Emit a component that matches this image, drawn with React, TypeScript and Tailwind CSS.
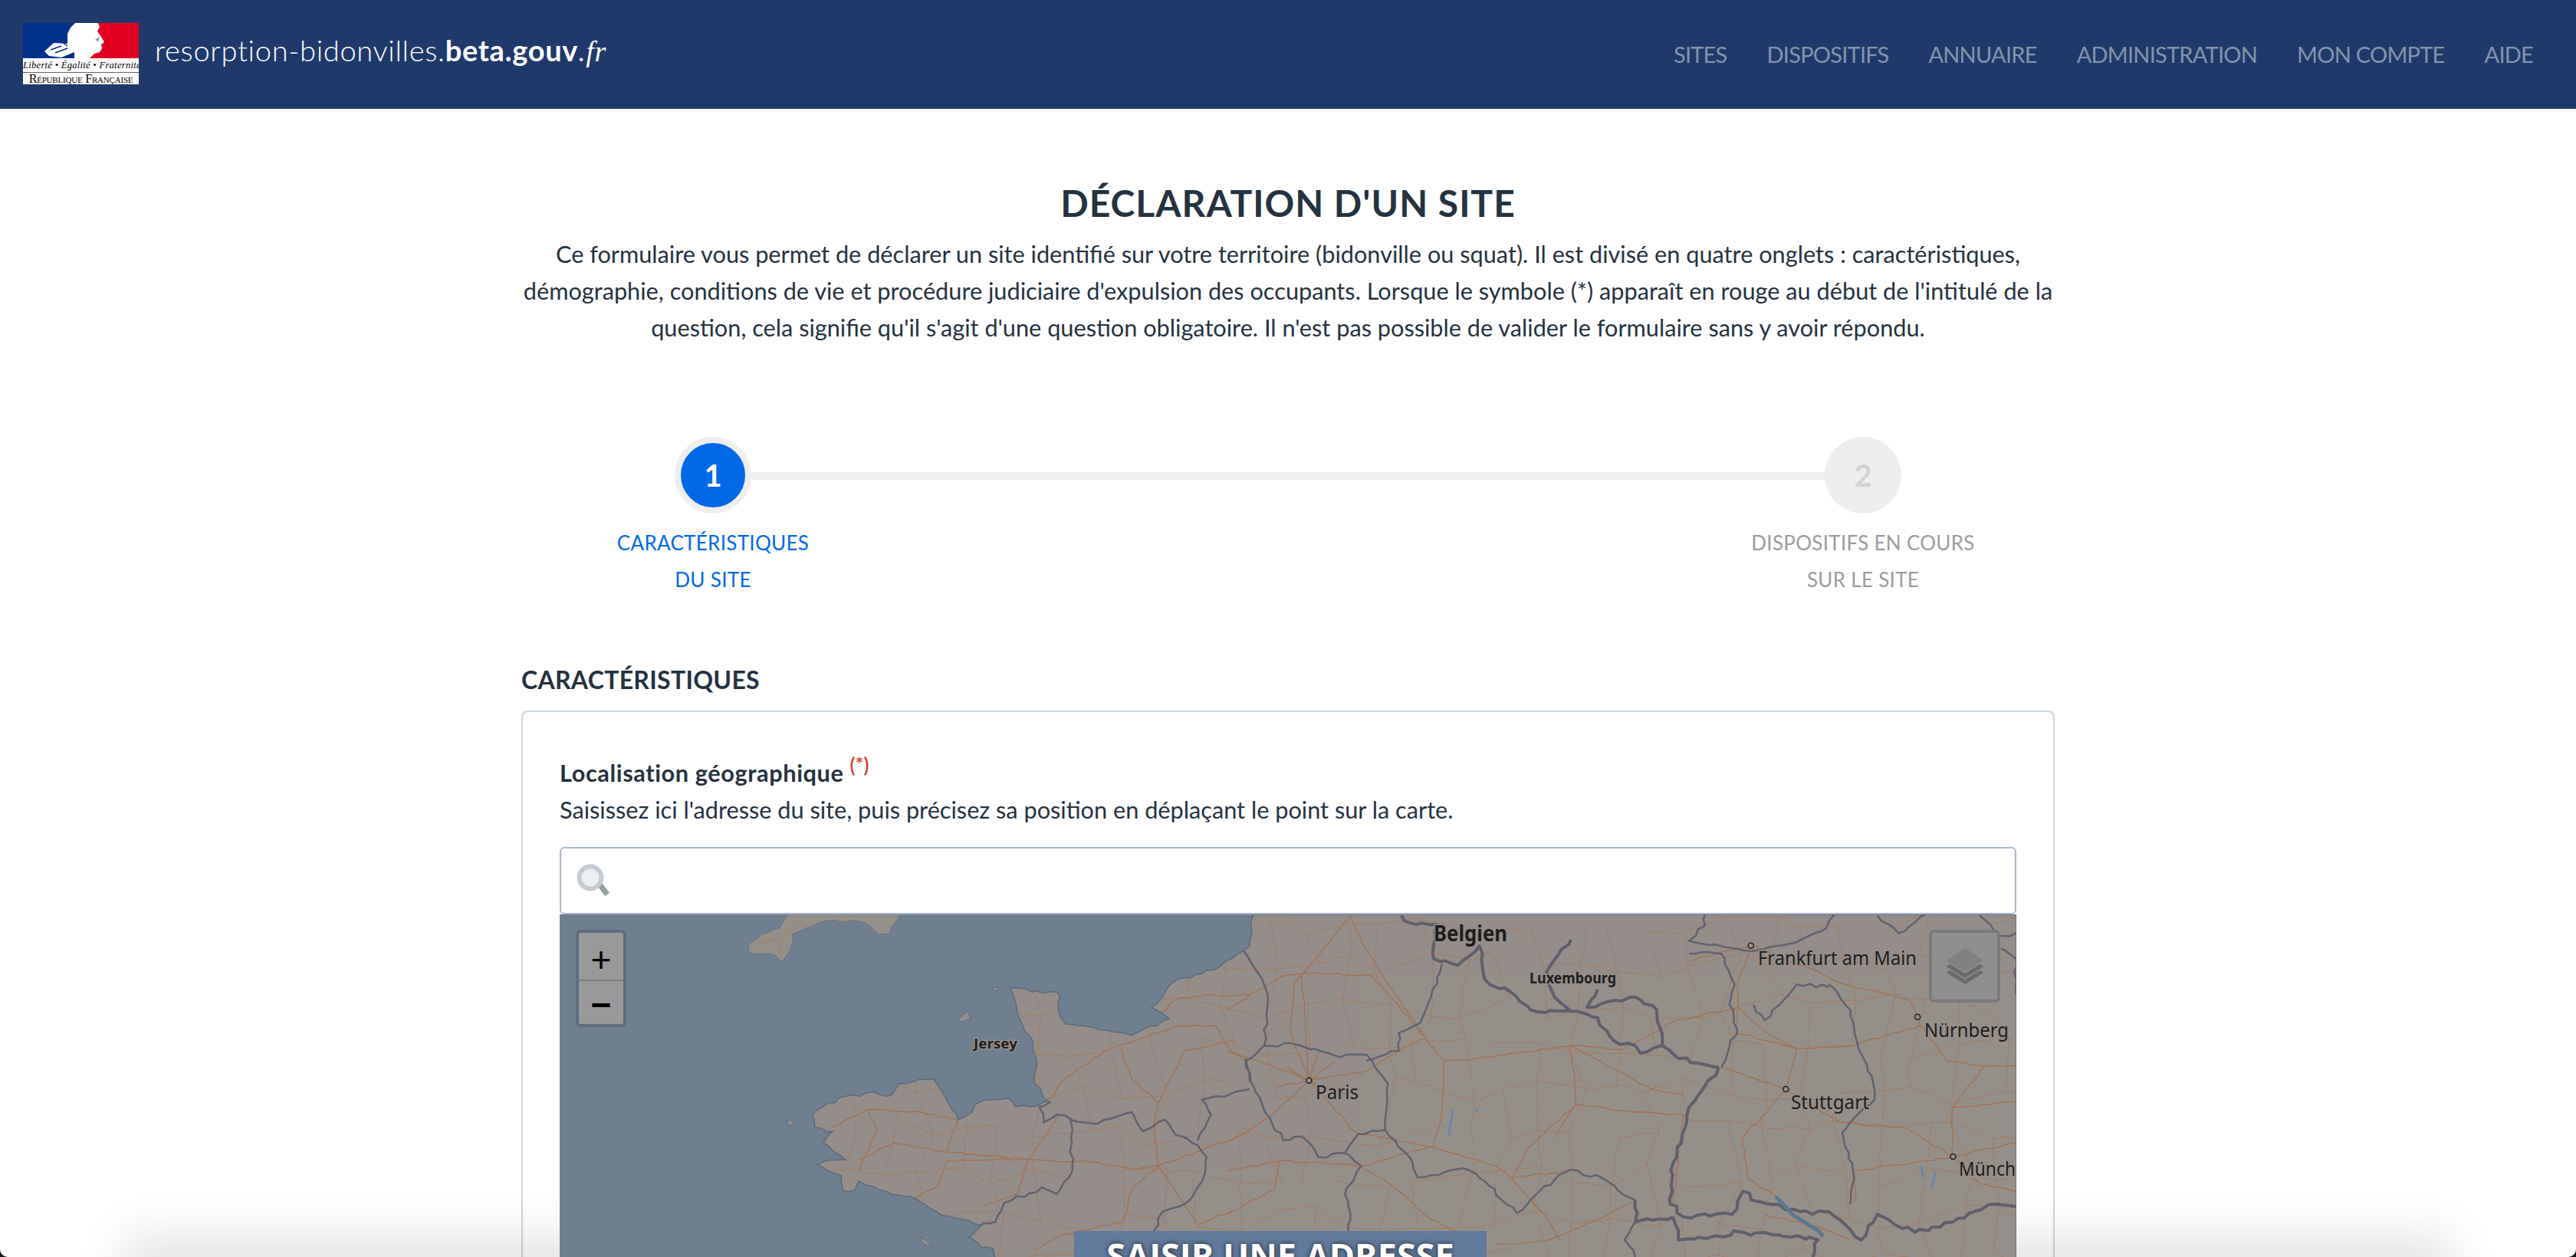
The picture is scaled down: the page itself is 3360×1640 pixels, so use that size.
type Pt = [number, number];

const navItems = ["SITES", "DISPOSITIFS", "ANNUAIRE", "ADMINISTRATION", "MON COMPTE", "AIDE"];

// the map was traced from two crops, each with its own scale
const fromEast = (p: Pt): Pt => [1600 + p[0] * 0.7013, 1150 + p[1] / 3];
const fromWest = (p: Pt): Pt => [730 + p[0] * 0.574, 1180 + p[1] / 3];

let seed = 7;
const rnd = () => {
  seed = (seed * 16807) % 2147483647;
  return seed / 2147483647;
};

// cut every segment in short pieces with some noise, roads and borders are never straight
const wiggle = (pts: Pt[], amount: number) => {
  const out: Pt[] = [pts[0]];
  for (let i = 1; i < pts.length; i++) {
    const [ax, ay] = pts[i - 1];
    const [bx, by] = pts[i];
    const steps = Math.max(1, Math.round(Math.hypot(bx - ax, by - ay) / 9));
    for (let s = 1; s <= steps; s++) {
      const t = s / steps;
      const n = s === steps ? 0 : amount;
      out.push([ax + (bx - ax) * t + (rnd() - 0.5) * n, ay + (by - ay) * t + (rnd() - 0.5) * n]);
    }
  }
  return out;
};

const toPath = (pts: Pt[]) =>
  pts.map((p, i) => `${i ? "L" : "M"}${p[0].toFixed(1)} ${p[1].toFixed(1)}`).join("");

const coast: Pt[] = [
  [1635, 1192], [1630, 1233], [1591, 1260], [1534, 1278], [1502, 1313], [1525, 1328], [1476, 1350],
  [1442, 1343], [1390, 1335], [1384, 1327], [1379, 1293], [1353, 1292], [1318, 1288], [1327, 1320],
  [1347, 1357], [1353, 1387], [1350, 1413], [1370, 1437], [1324, 1443], [1315, 1432], [1281, 1435],
  [1250, 1460], [1238, 1440], [1218, 1407], [1172, 1413], [1163, 1428], [1129, 1425], [1080, 1438],
  [1060, 1453], [1063, 1470], [1086, 1475], [1074, 1490], [1103, 1512], [1066, 1518], [1097, 1533],
  [1100, 1553], [1115, 1552], [1120, 1540], [1155, 1553], [1195, 1563], [1229, 1585], [1281, 1597],
  [1264, 1613], [1281, 1627], [1295, 1628], [1298, 1640],
];
const landPath = toPath(wiggle(coast, 5)) + "L2630 1640L2630 1192Z";

const cornwall: Pt[] = [
  [1028, 1192], [1017, 1210], [994, 1218], [977, 1230], [977, 1242], [1011, 1245], [1020, 1254], [1031, 1237],
  [1034, 1217], [1069, 1202], [1109, 1200], [1126, 1202], [1146, 1218], [1160, 1218], [1175, 1192],
];
const cornwallPath = toPath(wiggle(cornwall, 4)) + "Z";

const islands: Pt[][] = [
  [[1249, 1330], [1262, 1318], [1266, 1328], [1256, 1332]],
  [[1200, 1612], [1208, 1618], [1216, 1626], [1204, 1622]],
  [[1026, 1462], [1032, 1460], [1036, 1466], [1030, 1468]],
  [[1294, 1290], [1300, 1286], [1302, 1292]],
];

const thickBorders: Pt[][] = [
  [[325, 130], [330, 150], [390, 165], [385, 300], [430, 325], [470, 250], [480, 380], [540, 450], [565, 500], [640, 505], [690, 530], [720, 620], [760, 640], [770, 670], [810, 640], [840, 690], [915, 725]],
  [[915, 725], [860, 880], [830, 1100], [825, 1260], [850, 1310], [940, 1300], [960, 1210], [990, 1250], [1090, 1300], [1120, 1290], [1180, 1400], [1210, 1300], [1280, 1370], [1350, 1330], [1430, 1260], [1468, 1270]],
  [[640, 225], [595, 350], [610, 450], [640, 505]],
  [[690, 420], [670, 490], [760, 450], [800, 500], [810, 640]],
  [[760, 1245], [760, 1330], [830, 1310]],
  [[830, 1310], [840, 1400], [960, 1370], [1100, 1400], [1090, 1470]],
];
const regionBorders: Pt[][] = [
  [[30, 265], [75, 430], [75, 500], [70, 640], [130, 635], [210, 685], [260, 675], [300, 790], [295, 970], [245, 985], [220, 1060], [170, 1075], [140, 995], [105, 1010], [80, 920], [50, 800], [35, 700], [70, 640]],
  [[295, 970], [340, 1075], [355, 1155], [440, 1120], [480, 1170], [520, 1260], [540, 1295], [590, 1190], [640, 1125], [700, 1160], [760, 1245]],
  [[260, 700], [320, 660], [320, 590], [360, 550], [380, 450], [400, 320]],
  [[1120, 400], [1160, 500], [1175, 650], [1200, 760], [1205, 850], [1160, 940], [1145, 980], [1165, 1130], [1160, 1260]],
  [[860, 280], [920, 280], [945, 400], [935, 480], [950, 580], [920, 725]],
  [[980, 480], [1000, 540], [1060, 400], [1120, 410]],
  [[1130, 126], [1115, 180], [1060, 235], [1050, 240], [975, 270], [860, 230], [890, 170], [890, 126]],
  [[1210, 130], [1250, 200], [1300, 126]],
  [[1400, 130], [1440, 210], [1468, 200]],
  [[1440, 260], [1468, 300], [1468, 440]],
  [[220, 1060], [250, 1110], [220, 1220], [230, 1320], [225, 1470]],
  [[760, 1330], [740, 1400], [760, 1470]],
];
const westBorders: Pt[][] = [
  [[1115, 770], [1090, 790], [1100, 850], [1130, 820], [1210, 855], [1300, 810], [1325, 885], [1345, 870], [1375, 840], [1400, 900], [1450, 940], [1470, 985], [1460, 1080], [1420, 1170], [1370, 1200], [1350, 1275], [1340, 1380]],
  [[1160, 830], [1165, 1040], [1130, 1130], [1095, 1105], [1010, 1165], [990, 1240], [960, 1245]],
  [[1568, 720], [1460, 760], [1480, 820], [1450, 920]],
  [[1560, 600], [1568, 690]],
];

const eastRoads: Pt[][] = [
  [[405, 700], [480, 685], [560, 665], [640, 640], [735, 655], [830, 545], [950, 490]],
  [[153, 776], [260, 740], [320, 660], [370, 610], [405, 700], [400, 900], [385, 1035]],
  [[370, 610], [300, 400], [255, 250], [230, 130]],
  [[153, 776], [140, 360], [100, 370], [70, 410], [0, 500]],
  [[140, 355], [270, 365], [370, 610]],
  [[153, 776], [120, 600], [125, 400], [230, 130]],
  [[640, 640], [650, 870], [610, 1000]],
  [[650, 870], [760, 900], [850, 910]],
  [[153, 776], [240, 980], [380, 1035], [500, 1110], [530, 1160], [640, 1125]],
  [[153, 776], [80, 920], [0, 1020]],
  [[380, 1035], [250, 1110], [100, 1090], [0, 1130]],
  [[250, 1110], [310, 1190], [380, 1320], [460, 1400]],
  [[100, 1090], [90, 1200], [0, 1300]],
  [[950, 490], [1010, 600], [1060, 650], [1165, 640], [1290, 560], [1285, 527]],
  [[975, 248], [950, 400], [950, 590], [1060, 650]],
  [[975, 248], [910, 280], [860, 310]],
  [[975, 248], [1100, 350], [1150, 400], [1270, 460], [1285, 527]],
  [[1290, 560], [1340, 700], [1420, 720], [1468, 720]],
  [[1060, 650], [1040, 810], [960, 1000], [970, 1160], [1030, 1240]],
  [[1040, 810], [1140, 940], [1260, 960], [1350, 1074]],
  [[1350, 1074], [1165, 1130], [1170, 1250]],
  [[1350, 1074], [1468, 1020]],
  [[1350, 1074], [1400, 1180], [1468, 1210]],
  [[1350, 1074], [1350, 880], [1410, 720]],
  [[1350, 880], [1468, 860]],
  [[920, 725], [1040, 810]],
  [[850, 910], [830, 1260]],
  [[850, 830], [790, 810], [640, 640]],
  [[650, 870], [560, 1040], [530, 1160]],
  [[530, 1160], [590, 1300], [620, 1400]],
  [[760, 1245], [680, 1330], [600, 1400], [500, 1420]],
  [[1000, 1300], [1100, 1350], [1160, 1400]],
  [[153, 776], [60, 700], [0, 660]],
  [[153, 776], [110, 720]],
  [[153, 776], [200, 700]],
  [[153, 776], [90, 800]],
  [[153, 776], [220, 830]],
  [[153, 776], [170, 670]],
];
const westRoads: Pt[][] = [
  [[1568, 350], [1530, 355], [1470, 350], [1400, 370], [1370, 420]],
  [[1490, 470], [1410, 470], [1290, 540], [1240, 570], [1140, 690], [1110, 770]],
  [[1275, 555], [1300, 680], [1360, 775], [1350, 850], [1360, 1020], [1300, 1110], [1280, 1240], [1140, 1290], [1080, 1350]],
  [[1490, 470], [1520, 560], [1560, 610]],
  [[1420, 570], [1500, 540], [1530, 530]],
  [[1420, 570], [1360, 775]],
  [[1165, 1005], [1210, 1005], [1300, 1035], [1360, 1020], [1450, 965], [1568, 890]],
  [[1360, 1020], [1450, 1250], [1530, 1195]],
  [[1065, 995], [1165, 1005]],
  [[1065, 995], [1120, 860], [1130, 820]],
  [[1065, 995], [880, 965], [760, 930], [680, 1000]],
  [[1065, 995], [1040, 1130], [960, 1180]],
  [[1065, 995], [880, 1000], [860, 1100], [800, 1150]],
  [[700, 800], [820, 810], [905, 840], [880, 960]],
  [[620, 870], [700, 800], [720, 880], [680, 1040]],
];

const majorRoads = [...eastRoads.map((r) => r.map(fromEast)), ...westRoads.map((r) => r.map(fromWest))].map((r) => toPath(wiggle(r, 2.5)));
const borders = [...thickBorders.map((b) => b.map(fromEast))].map((b) => toPath(wiggle(b, 6)));
const thinBorders = [...regionBorders.map((b) => b.map(fromEast)), ...westBorders.map((b) => b.map(fromWest))].map((b) => toPath(wiggle(b, 5)));

// the fine road mesh is filler: a jittered grid, clipped to the land
const meshNodes: Pt[][] = [];
for (let r = 0; r < 9; r++) {
  const row: Pt[] = [];
  for (let c = 0; c < 34; c++) row.push([1040 + c * 50 + rnd() * 34, 1185 + r * 55 + rnd() * 34]);
  meshNodes.push(row);
}
const mesh: string[] = [];
meshNodes.forEach((row, r) =>
  row.forEach((n, c) => {
    if (c < 33 && rnd() > 0.2) mesh.push(toPath(wiggle([n, row[c + 1]], 3)));
    if (r < 8 && rnd() > 0.25) mesh.push(toPath(wiggle([n, meshNodes[r + 1][c]], 3)));
  }),
);

const cities: Pt[] = ([[975, 248], [1285, 527], [153, 776], [1040, 810], [1351, 1074]] as Pt[]).map(fromEast);

const labels = [
  { text: "Belgien", x: 1870, y: 1227, w: 96, size: 28, bold: true },
  { text: "Luxembourg", x: 1995, y: 1282, w: 113, size: 19, bold: true },
  { text: "Frankfurt am Main", x: 2293, y: 1258, w: 207, size: 26, bold: false },
  { text: "Nürnberg", x: 2510, y: 1352, w: 110, size: 26, bold: false },
  { text: "Paris", x: 1716, y: 1433, w: 56, size: 26, bold: false },
  { text: "Stuttgart", x: 2336, y: 1446, w: 102, size: 26, bold: false },
  { text: "Münch", x: 2555, y: 1533, w: 74, size: 26, bold: false },
  { text: "Jersey", x: 1270, y: 1367, w: 57, size: 18, bold: true },
];

function MapDrawing() {
  return (
    <svg viewBox="730 1192 1900 448" className="block w-full h-[448px]">
      <defs>
        <clipPath id="land">
          <path d={landPath} />
        </clipPath>
        <clipPath id="cornwall">
          <path d={cornwallPath} />
        </clipPath>
      </defs>
      <rect x="730" y="1192" width="1900" height="448" fill="#6f7f90" />
      <g fill="#958f8a" stroke="#5e6a7d" strokeWidth="1.5">
        <path d={landPath} />
        <path d={cornwallPath} strokeWidth="0.6" />
        {islands.map((p, i) => (
          <path key={i} d={toPath(p) + "Z"} strokeWidth="1" />
        ))}
      </g>
      <g clipPath="url(#cornwall)" fill="none" stroke="#a57d5f" strokeWidth="1">
        <path d="M985 1232L1020 1222L1040 1208L1090 1200M1090 1200L1126 1202L1140 1216M1020 1222L1016 1246" />
      </g>
      <g clipPath="url(#land)" fill="none">
        <g stroke="#a47c5f" strokeWidth="1" opacity="0.85">
          {mesh.map((d, i) => (
            <path key={i} d={d} />
          ))}
        </g>
        <g stroke="#a56f4a" strokeWidth="1.4" opacity="0.85">
          {majorRoads.map((d, i) => (
            <path key={i} d={d} />
          ))}
        </g>
        <g stroke="#62626f" strokeWidth="2.5">
          {thinBorders.map((d, i) => (
            <path key={i} d={d} />
          ))}
        </g>
        <g stroke="#5f5f6c" strokeWidth="4" strokeLinejoin="round">
          {borders.map((d, i) => (
            <path key={i} d={d} />
          ))}
        </g>
        <path d="M2316 1560L2340 1585L2372 1605L2378 1612" stroke="#5d7791" strokeWidth="5" />
        <path d="M1890 1480L1895 1446M1925 1450L1928 1444M2506 1520L2508 1535M2524 1528L2520 1550" stroke="#6b87a3" strokeWidth="3" />
      </g>
      {cities.map((c, i) => (
        <circle key={i} cx={c[0]} cy={c[1]} r="3.5" fill="#958f8a" stroke="#222" strokeWidth="1.5" />
      ))}
      {labels.map((l) => (
        <text
          key={l.text}
          x={l.x}
          y={l.y}
          fontFamily="'Noto Sans', sans-serif"
          fontSize={l.size}
          fontWeight={l.bold ? 700 : 400}
          textLength={l.w}
          lengthAdjust="spacingAndGlyphs"
          fill="#1d1d1d"
          stroke="#958f8a"
          strokeWidth="3"
          paintOrder="stroke"
        >
          {l.text}
        </text>
      ))}
    </svg>
  );
}

function Logo() {
  return (
    <div className="flex flex-col w-[151px] h-[80px] bg-white overflow-hidden shrink-0 font-['Liberation_Serif',serif] text-black">
      <svg viewBox="0 0 151 46" className="block w-[151px] h-[46px] shrink-0">
        <rect width="76" height="46" fill="#003189" />
        <rect x="76" width="75" height="46" fill="#e1001f" />
        <path
          d="M68 0H98L100 5L97 11L102 18L106 25L102 28L103 33L100 38L93 40L87 46H67V38L50 45L34 43L28 37L40 26L58 27V14L62 6Z"
          fill="#fff"
        />
        <path d="M36 35L50 30M42 39L58 33M52 26L58 30" stroke="#003189" strokeWidth="1.5" fill="none" />
        <path d="M94 22L100 18L98 24Z" fill="#8c8c8c" />
      </svg>
      <div className="text-[12.5px] leading-[15px] italic whitespace-nowrap mt-[2px] tracking-[0.3px] text-center">Liberté • Égalité • Fraternité</div>
      <div className="h-px bg-[#666] mt-[1px]" />
      <div className="text-[16px] leading-[15px] whitespace-nowrap [font-variant:small-caps] tracking-[-0.2px] text-center">République Française</div>
    </div>
  );
}

function Step({ label, sub, active }: { label: string; sub: string; active?: boolean }) {
  return (
    <div className={`w-[300px] text-center font-['Lato',sans-serif] text-[26px] leading-[48px] tracking-[0.3px] ${active ? "text-[#0069e8]" : "text-[#9c9c9c]"}`}>
      <div>{label}</div>
      <div>{sub}</div>
    </div>
  );
}

export default function App() {
  return (
    <div className="relative w-[3360px] h-[1640px] overflow-hidden bg-white text-[#25323f] font-['Lato',sans-serif]">
      <header className="flex items-center justify-between h-[142px] bg-[#20396b] pl-[30px] pr-[56px]">
        <div className="flex items-center gap-[21px] -mt-[2px]">
          <Logo />
          <div className="text-white text-[38px] leading-[44px] font-light whitespace-nowrap tracking-[0.7px] -mt-[8px]">
            resorption-bidonvilles.<span className="font-bold">beta.gouv</span>
            <span className="font-['Liberation_Serif',serif] italic">.fr</span>
          </div>
        </div>
        <nav className="flex gap-[52px] text-[#8494ab] text-[29px] leading-[40px] tracking-[-0.77px] -mt-[1px] whitespace-nowrap">
          {navItems.map((item) => (
            <a key={item}>{item}</a>
          ))}
        </nav>
      </header>

      <main className="w-[2000px] mx-auto">
        <h1 className="pt-[90px] text-center text-[48px] leading-[66px] font-bold tracking-[1px] text-[#25323f]">DÉCLARATION D'UN SITE</h1>
        <p className="mt-[10px] text-center text-[30.7px] leading-[48px]">
          Ce formulaire vous permet de déclarer un site identifié sur votre territoire (bidonville ou squat). Il est divisé en quatre onglets : caractéristiques,
          <br />
          démographie, conditions de vie et procédure judiciaire d'expulsion des occupants. Lorsque le symbole (*) apparaît en rouge au début de l'intitulé de la
          <br />
          question, cela signifie qu'il s'agit d'une question obligatoire. Il n'est pas possible de valider le formulaire sans y avoir répondu.
        </p>

        <div className="mt-[118px]">
          <div className="flex items-center px-[200px]">
            <div className="flex items-center justify-center w-[100px] h-[100px] rounded-full bg-[#0069e8] border-[8px] border-[#eeeeee] text-white text-[40px] font-bold">1</div>
            <div className="flex-1 h-[10px] bg-[#eeeeee] mt-[2px]" />
            <div className="flex items-center justify-center w-[100px] h-[100px] rounded-full bg-[#eeeeee] text-[#d2d2d2] text-[40px] font-bold">2</div>
          </div>
          <div className="flex justify-between px-[100px] mt-[14px]">
            <Step label="CARACTÉRISTIQUES" sub="DU SITE" active />
            <Step label="DISPOSITIFS EN COURS" sub="SUR LE SITE" />
          </div>
        </div>

        <h2 className="mt-[87px] text-[32px] leading-[40px] font-bold tracking-[0.3px]">CARACTÉRISTIQUES</h2>

        <section className="mt-[20px] border-2 border-[#c9d6e4] rounded-[8px] px-[48px] pt-[56px]">
          <div className="text-[30.7px] leading-[48px]">
            <div>
              <span className="font-bold tracking-[0.6px]">Localisation géographique</span>
              <sup className="ml-[8px] text-[#d93025] text-[26px] font-medium top-[-12px]">(*)</sup>
            </div>
            <div>Saisissez ici l'adresse du site, puis précisez sa position en déplaçant le point sur la carte.</div>
          </div>

          <div className="flex items-center h-[88px] mt-[24px] pl-[20px] bg-white border-2 border-[#a9b6ca] rounded-[6px]">
            <svg width="44" height="44" viewBox="0 0 44 44">
              <path d="M28 30L34 26L43 38L37 42Z" fill="#8fa09e" />
              <circle cx="18" cy="18" r="14.5" fill="#edf0f2" stroke="#c5cbd2" strokeWidth="6" />
            </svg>
          </div>

          <div className="relative z-10 h-[800px] overflow-hidden bg-[#6f7f90]">
            <MapDrawing />

            <div className="absolute left-[21px] top-[20px] flex flex-col w-[66px] h-[127px] border-4 border-[#5f6d7e] rounded-[6px] bg-[#999999] text-black font-['Liberation_Sans',sans-serif]">
              <div className="flex flex-1 items-center justify-center pt-[10px] text-[46px] leading-none border-b-2 border-[#7d7d7d]">+</div>
              <div className="flex flex-1 items-center justify-center pt-[6px] text-[46px] leading-none font-bold">−</div>
            </div>

            <div className="absolute right-[21px] top-[20px] flex items-center justify-center w-[93px] h-[95px] border-4 border-[#7a7a7a] rounded-[6px] bg-[#8f8f8f]">
              <svg width="54" height="50" viewBox="0 0 54 50">
                <path d="M27 16L53 33L27 49L1 33Z" fill="#6a6a6a" stroke="#8f8f8f" strokeWidth="1.5" />
                <path d="M27 8L53 25L27 41L1 25Z" fill="#6a6a6a" stroke="#8f8f8f" strokeWidth="1.5" />
                <path d="M27 0L53 17L27 33L1 17Z" fill="#818181" stroke="#8f8f8f" strokeWidth="1.5" />
              </svg>
            </div>

            <div className="absolute left-[671px] top-[413px] w-[538px] h-[100px] bg-[#627a9b] pt-[2px] text-center text-white text-[45px] leading-[60px] font-['Open_Sans',sans-serif] font-bold [text-shadow:0_0_6px_rgba(0,0,0,0.7)] whitespace-nowrap">
              SAISIR UNE ADRESSE
            </div>
          </div>
        </section>
      </main>

      {/* shadow of a bar that sits just below the visible part of the page */}
      <div className="absolute left-[200px] right-[200px] top-[1650px] h-[20px] shadow-[0_0_60px_40px_rgba(0,0,0,0.1)]" />

      {/* rounded corners of the window in the capture */}
      <svg className="absolute left-0 bottom-0 z-20" width="10" height="10" viewBox="0 0 10 10">
        <path d="M0 0A10 10 0 0 0 10 10H0Z" fill="#1a1a1a" />
      </svg>
      <svg className="absolute right-0 bottom-0 z-20" width="10" height="10" viewBox="0 0 10 10">
        <path d="M10 0A10 10 0 0 1 0 10H10Z" fill="#1a1a1a" />
      </svg>
    </div>
  );
}
